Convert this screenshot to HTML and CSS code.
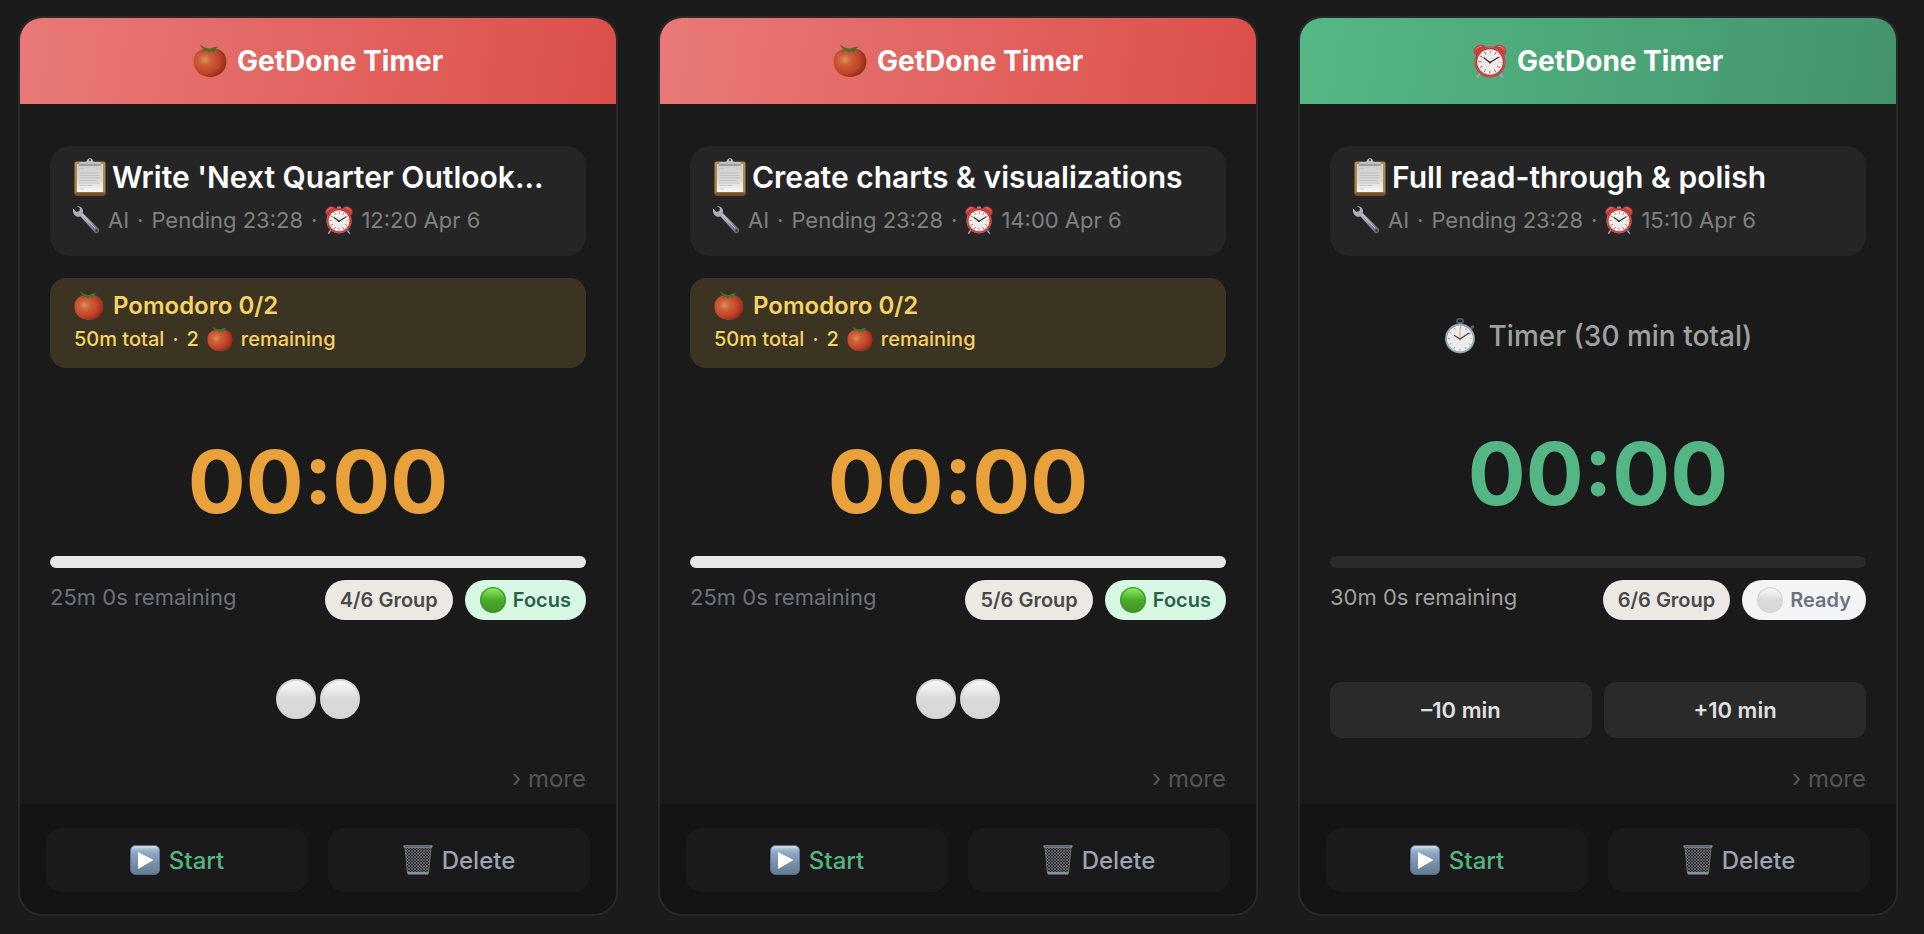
FILE: index.html
```html
<!DOCTYPE html>
<html lang="en">
<head>
<meta charset="utf-8">
<title>GetDone Timer</title>
<link rel="stylesheet" href="styles.css">
</head>
<body>
<svg class="defs" aria-hidden="true">
  <defs>
    <radialGradient id="tomato-skin" cx="0.35" cy="0.4" r="0.75">
      <stop offset="0" stop-color="#d9915a"/><stop offset="0.25" stop-color="#cf6038"/><stop offset="0.6" stop-color="#c0452a"/><stop offset="1" stop-color="#7e2014"/>
    </radialGradient>
    <linearGradient id="paper" x1="0" y1="0" x2="0" y2="1"><stop offset="0" stop-color="#cfcfcf"/><stop offset="0.6" stop-color="#dadada"/><stop offset="1" stop-color="#fafafa"/></linearGradient>
    <linearGradient id="steel" x1="0" y1="0" x2="1" y2="1"><stop offset="0" stop-color="#b4bec8"/><stop offset="0.55" stop-color="#9a9fae"/><stop offset="1" stop-color="#6f5c62"/></linearGradient>
    <linearGradient id="play-face" x1="0" y1="0" x2="0" y2="1"><stop offset="0" stop-color="#c3d4e6"/><stop offset="0.25" stop-color="#8ba7c5"/><stop offset="1" stop-color="#64798f"/></linearGradient>
    <linearGradient id="green-ball" x1="0" y1="0" x2="0" y2="1"><stop offset="0" stop-color="#8df25f"/><stop offset="0.3" stop-color="#5fc83c"/><stop offset="0.5" stop-color="#4bab2c"/><stop offset="1" stop-color="#3f9325"/></linearGradient>
    <linearGradient id="white-ball" x1="0" y1="0" x2="0" y2="1"><stop offset="0" stop-color="#f8f8f8"/><stop offset="0.25" stop-color="#ececec"/><stop offset="0.5" stop-color="#d9d9d9"/><stop offset="1" stop-color="#d8d8d8"/></linearGradient>
    <pattern id="mesh" width="3" height="3" patternUnits="userSpaceOnUse"><path d="M0 0L3 3M3 0L0 3" stroke="#8a8e95" stroke-width="0.6"/></pattern>
  </defs>
  <symbol id="tomato" viewBox="0 0 32 32">
    <path d="M16 4.500C24 3 31.500 7.500 31.500 16.500C31.500 25.500 24.500 31 16 31C7.500 31 0.500 25.500 0.500 16.500C0.500 7.500 8 3 16 4.500Z" fill="url(#tomato-skin)"/>
    <path d="M16 4.500C13 4 10 3.500 6.500 0.200C7.500 3 9 4.500 10.500 5.200L8 7.500L13 6.300L15 8.500L17 6.300L20 8L20.500 5.800L25 6.500L21.500 4.200L24.500 2.500C21.500 2.500 19 2.500 16 4.500Z" fill="#496f2b"/>
  </symbol>
  <symbol id="clipboard" viewBox="0 0 32 38">
    <rect x="0.500" y="3.500" width="31" height="34" rx="2" fill="#b08a4c"/>
    <path d="M1 34.500H31V36Q31 37.500 29 37.500H3Q1 37.500 1 36Z" fill="#77522a"/>
    <rect x="3" y="6" width="26" height="28" fill="url(#paper)"/>
    <path d="M5.500 11H10M5.500 15H25M5.500 17.500H25M5.500 20H25M5.500 22.500H23M5.500 25H25M5.500 27.500H18M5.500 31H10" stroke="#b9b9b9" stroke-width="0.7"/>
    <path d="M5 7.500V5.500Q5 4 7 4H12Q13 2.500 13.500 1.500Q16 -0.800 18.500 1.500Q19 3 20 4H25Q27 4 27 5.500V7.500Z" fill="#b9c1c9"/>
    <path d="M5 7H27" stroke="#6c747c" stroke-width="0.9"/>
    <circle cx="16" cy="2.200" r="1.100" fill="#46494d"/>
  </symbol>
  <symbol id="wrench" viewBox="0 0 28 28">
    <path d="M1 2.500L4.500 6L7.500 5L8 2L5 0.300C9 -0.300 12 3 10.800 7L26.500 22.500C28.500 25 25.500 28.500 23 26.700L8.500 10.500C4.500 11.800 0.200 8.500 1 2.500Z" fill="url(#steel)"/>
    <path d="M10 8.500L23 22" stroke="#d7dce2" stroke-width="0.8"/>
    <circle cx="24.600" cy="24.700" r="1.100" fill="#2a2526"/>
  </symbol>
  <symbol id="alarm" viewBox="0 0 34 34">
    <path d="M7.500 28.500L4.500 33M26.500 28.500L29.500 33" stroke="#a9adb4" stroke-width="1.700" stroke-linecap="round"/>
    <rect x="14.500" y="0.500" width="5" height="3" rx="1" fill="#8c949c"/>
    <path d="M1 9.500C-1 4 5.500 -1.500 11.500 1.500L13.500 4L3.500 12Z" fill="#c9403f"/>
    <path d="M33 9.500C35 4 28.500 -1.500 22.500 1.500L20.500 4L30.500 12Z" fill="#c9403f"/>
    <path d="M2.500 6Q5 2 9 2M25 2Q29 2 31.500 6" fill="none" stroke="#e57c78" stroke-width="1"/>
    <circle cx="17" cy="18" r="15.500" fill="#b93436"/>
    <circle cx="17" cy="18" r="14.700" fill="none" stroke="#d9635f" stroke-width="0.800"/>
    <circle cx="17" cy="18" r="12.800" fill="#edecea"/>
    <circle cx="17" cy="18" r="10" fill="none" stroke="#c45353" stroke-width="3.200" stroke-dasharray="0.800 4.436" stroke-dashoffset="0.400"/>
    <path d="M11 14L17 18.500L25 13.500" fill="none" stroke="#303030" stroke-width="1.300" stroke-linecap="round"/>
    <circle cx="17" cy="18.500" r="1" fill="#222"/>
  </symbol>
  <symbol id="stopwatch" viewBox="0 0 32 36">
    <rect x="13" y="1" width="6" height="4" rx="1.500" fill="none" stroke="#59636c" stroke-width="1.500"/>
    <rect x="14" y="4.500" width="4" height="3" fill="#6d7780"/>
    <path d="M27 10.500L29 8.500" stroke="#59636c" stroke-width="2.500" stroke-linecap="round"/>
    <circle cx="16" cy="20.500" r="15" fill="#7a8897"/>
    <circle cx="16" cy="20.500" r="14" fill="none" stroke="#b3c0cd" stroke-width="0.800"/>
    <circle cx="16" cy="20.500" r="13" fill="#ececea"/>
    <circle cx="16" cy="20.500" r="11" fill="none" stroke="#929292" stroke-width="2" stroke-dasharray="0.800 4.960" stroke-dashoffset="0.400"/>
    <path d="M16 9V23" stroke="#e0a080" stroke-width="1"/>
    <path d="M10.500 17.500L16 21L25 15" fill="none" stroke="#454545" stroke-width="1.200" stroke-linecap="round"/>
  </symbol>
  <symbol id="play" viewBox="0 0 30 30">
    <rect x="0.500" y="0.500" width="29" height="29" rx="5" fill="url(#play-face)" stroke="#5b6f86"/>
    <path d="M2.500 4Q3 2 6 2H24Q27 2 27.500 4" fill="none" stroke="#d5e2ee" stroke-width="1"/>
    <path d="M8 7L23.500 15L8 24Z" fill="#fff"/>
  </symbol>
  <symbol id="trash" viewBox="0 0 30 30">
    <path d="M2 2.500L4.500 28Q4.700 29.500 6 29.500H24Q25.300 29.500 25.500 28L28 2.500Z" fill="#25272a"/>
    <path d="M2 2.500L4.500 28H25.500L28 2.500Z" fill="url(#mesh)" stroke="#777c84" stroke-width="0.800"/>
    <rect x="0.300" y="0.300" width="29.400" height="2.400" rx="1.100" fill="#8a8f97"/>
    <path d="M2 1.700H28" stroke="#474b50" stroke-width="0.800"/>
    <path d="M4.300 27H25.700L25.200 29.500H4.800Z" fill="#8794a5"/>
  </symbol>
  <symbol id="ball-green" viewBox="0 0 40 40"><circle cx="20" cy="20" r="19" fill="url(#green-ball)" stroke="#3f9226" stroke-width="2"/></symbol>
  <symbol id="ball-white" viewBox="0 0 40 40"><circle cx="20" cy="20" r="19" fill="url(#white-ball)" stroke="#d5d5d5" stroke-width="2"/></symbol>
</svg>

<main class="board">
  <article class="card card--pomodoro">
    <header class="card-head"><svg class="icon-head"><use href="#tomato"/></svg><h2>GetDone Timer</h2></header>
    <div class="card-body">
      <section class="task">
        <h3 class="task-title"><svg class="icon-clip"><use href="#clipboard"/></svg><span>Write 'Next Quarter Outlook...</span></h3>
        <p class="task-meta"><svg class="icon-wrench"><use href="#wrench"/></svg><span>AI</span><span>·</span><span>Pending 23:28</span><span>·</span><svg class="icon-meta"><use href="#alarm"/></svg><span>12:20 Apr 6</span></p>
      </section>
      <section class="mode mode--pomodoro">
        <h4><svg class="icon-mode"><use href="#tomato"/></svg>Pomodoro 0/2</h4>
        <p><span>50m total</span><span>·</span><span>2</span><svg class="icon-small"><use href="#tomato"/></svg><span>remaining</span></p>
      </section>
      <div class="clock">00:00</div>
      <div class="bar"></div>
      <div class="status">
        <span class="left">25m 0s remaining</span>
        <span class="pill pill--group">4/6 Group</span>
        <span class="pill pill--focus"><svg class="icon-pill"><use href="#ball-green"/></svg>Focus</span>
      </div>
      <div class="rounds"><svg class="icon-round"><use href="#ball-white"/></svg><svg class="icon-round"><use href="#ball-white"/></svg></div>
      <button type="button" class="more">› more</button>
    </div>
    <footer class="card-foot">
      <button type="button" class="action action--start"><svg class="icon-action"><use href="#play"/></svg>Start</button>
      <button type="button" class="action"><svg class="icon-action"><use href="#trash"/></svg>Delete</button>
    </footer>
  </article>

  <article class="card card--pomodoro">
    <header class="card-head"><svg class="icon-head"><use href="#tomato"/></svg><h2>GetDone Timer</h2></header>
    <div class="card-body">
      <section class="task">
        <h3 class="task-title"><svg class="icon-clip"><use href="#clipboard"/></svg><span>Create charts &amp; visualizations</span></h3>
        <p class="task-meta"><svg class="icon-wrench"><use href="#wrench"/></svg><span>AI</span><span>·</span><span>Pending 23:28</span><span>·</span><svg class="icon-meta"><use href="#alarm"/></svg><span>14:00 Apr 6</span></p>
      </section>
      <section class="mode mode--pomodoro">
        <h4><svg class="icon-mode"><use href="#tomato"/></svg>Pomodoro 0/2</h4>
        <p><span>50m total</span><span>·</span><span>2</span><svg class="icon-small"><use href="#tomato"/></svg><span>remaining</span></p>
      </section>
      <div class="clock">00:00</div>
      <div class="bar"></div>
      <div class="status">
        <span class="left">25m 0s remaining</span>
        <span class="pill pill--group">5/6 Group</span>
        <span class="pill pill--focus"><svg class="icon-pill"><use href="#ball-green"/></svg>Focus</span>
      </div>
      <div class="rounds"><svg class="icon-round"><use href="#ball-white"/></svg><svg class="icon-round"><use href="#ball-white"/></svg></div>
      <button type="button" class="more">› more</button>
    </div>
    <footer class="card-foot">
      <button type="button" class="action action--start"><svg class="icon-action"><use href="#play"/></svg>Start</button>
      <button type="button" class="action"><svg class="icon-action"><use href="#trash"/></svg>Delete</button>
    </footer>
  </article>

  <article class="card card--timer">
    <header class="card-head"><svg class="icon-head"><use href="#alarm"/></svg><h2>GetDone Timer</h2></header>
    <div class="card-body">
      <section class="task">
        <h3 class="task-title"><svg class="icon-clip"><use href="#clipboard"/></svg><span>Full read-through &amp; polish</span></h3>
        <p class="task-meta"><svg class="icon-wrench"><use href="#wrench"/></svg><span>AI</span><span>·</span><span>Pending 23:28</span><span>·</span><svg class="icon-meta"><use href="#alarm"/></svg><span>15:10 Apr 6</span></p>
      </section>
      <section class="mode mode--timer"><svg class="icon-watch"><use href="#stopwatch"/></svg><h4>Timer (30 min total)</h4></section>
      <div class="clock">00:00</div>
      <div class="bar"></div>
      <div class="status">
        <span class="left">30m 0s remaining</span>
        <span class="pill pill--group">6/6 Group</span>
        <span class="pill pill--ready"><svg class="icon-pill"><use href="#ball-white"/></svg>Ready</span>
      </div>
      <div class="adjust">
        <button type="button">–10 min</button>
        <button type="button">+10 min</button>
      </div>
      <button type="button" class="more">› more</button>
    </div>
    <footer class="card-foot">
      <button type="button" class="action action--start"><svg class="icon-action"><use href="#play"/></svg>Start</button>
      <button type="button" class="action"><svg class="icon-action"><use href="#trash"/></svg>Delete</button>
    </footer>
  </article>
</main>
</body>
</html>
```
FILE: styles.css
```css
* { box-sizing: border-box; }

body {
  margin: 0;
  background: #1b1b1b;
  color: #fff;
  font-family: Inter, "Liberation Sans", sans-serif;
}

h2, h3, h4, p { margin: 0; }
button { border: 0; font-family: inherit; cursor: pointer; }
svg { flex: none; }
.defs { position: absolute; width: 0; height: 0; }

.board {
  display: grid;
  grid-template-columns: repeat(3, minmax(0, 1fr));
  gap: 40px;
  padding: 16px 26px 18px 18px;
}

.card {
  display: flex;
  flex-direction: column;
  border: 2px solid #292929;
  border-radius: 24px;
  overflow: hidden;
  background: #1a1a1a;
}

.card-head {
  display: flex;
  align-items: center;
  justify-content: center;
  gap: 10px;
  height: 86px;
}
.card-head h2 { font-size: 28px; line-height: 34px; font-weight: 700; }
.card--pomodoro .card-head { background: linear-gradient(100deg, #e87a77, #dc4f4a); }
.card--timer .card-head { background: linear-gradient(100deg, #55b885, #43946b); }

.card-body {
  flex: 1;
  display: flex;
  flex-direction: column;
  min-height: 700px;
  padding: 42px 30px 8px;
}

.task {
  padding: 12px 22px 22px;
  border-radius: 20px;
  background: #252525;
}
.task-title {
  display: flex;
  align-items: center;
  gap: 6px;
  padding-left: 2px;
  font-size: 30px;
  line-height: 38px;
  font-weight: 600;
  white-space: nowrap;
}
.task-meta {
  display: flex;
  align-items: center;
  gap: 8px;
  margin-top: 10px;
  font-size: 22px;
  line-height: 28px;
  color: #808080;
  white-space: nowrap;
}

.mode { margin-top: 22px; }
.mode--pomodoro {
  padding: 12px 24px 16px;
  border-radius: 16px;
  background: #3b3423;
  color: #f6d365;
}
.mode--pomodoro h4 {
  display: flex;
  align-items: center;
  gap: 9px;
  font-size: 24px;
  line-height: 32px;
  font-weight: 600;
}
.mode--pomodoro p {
  display: flex;
  align-items: center;
  gap: 8px;
  margin-top: 4px;
  font-size: 20px;
  line-height: 26px;
  font-weight: 500;
}
.mode--timer {
  display: flex;
  align-items: center;
  justify-content: center;
  gap: 13px;
  margin-bottom: 2px;
  padding: 40px 0 4px;
  color: #a0a0a0;
}
.mode--timer h4 { font-size: 28px; line-height: 34px; font-weight: 500; }

.clock {
  margin: 60px 0 20px;
  font-size: 86px;
  line-height: 108px;
  font-weight: 700;
  text-align: center;
}
.card--pomodoro .clock { color: #e9a23b; }
.card--timer .clock { color: #55b685; margin-bottom: 28px; }

.bar { height: 12px; border-radius: 6px; background: #e5e7eb; }
.card--timer .bar { background: #2a2a2a; }

.status {
  display: flex;
  align-items: center;
  gap: 12px;
  margin-top: 12px;
}
.left {
  margin-right: auto;
  padding-bottom: 6px;
  font-size: 22px;
  line-height: 28px;
  color: #6b7280;
}
.card--timer .left { color: #a0a0a0; }
.pill {
  display: flex;
  align-items: center;
  gap: 7px;
  height: 40px;
  padding: 0 15px;
  border-radius: 20px;
  font-size: 20px;
  font-weight: 600;
  white-space: nowrap;
}
.pill--group { background: #ece8e3; color: #4a4a4a; }
.pill--focus { background: #d8f8e6; color: #2b6048; }
.pill--ready { background: #f3f4f6; color: #6b7280; }

.rounds { display: flex; justify-content: center; gap: 4px; margin-top: 59px; }

.adjust { display: flex; gap: 12px; margin-top: 62px; }
.adjust button {
  flex: 1;
  height: 56px;
  border-radius: 12px;
  background: #2a2a2a;
  color: #e0e0e0;
  font-size: 22px;
  font-weight: 600;
}

.more {
  align-self: flex-end;
  margin-top: auto;
  padding: 0;
  background: none;
  color: #555;
  font-size: 24px;
  line-height: 34px;
}

.card-foot {
  display: flex;
  gap: 20px;
  padding: 24px 26px 22px;
  background: #141414;
}
.action {
  flex: 1;
  display: flex;
  align-items: center;
  justify-content: center;
  gap: 9px;
  height: 64px;
  border-radius: 16px;
  background: #1a1a1a;
  color: #9ca3af;
  font-size: 24px;
  font-weight: 500;
}
.action--start { color: #55b685; }

.icon-head { width: 34px; height: 34px; }
.icon-clip { width: 32px; height: 38px; }
.icon-wrench { width: 28px; height: 28px; }
.icon-meta { width: 28px; height: 28px; }
.icon-mode { width: 30px; height: 30px; }
.icon-small { width: 26px; height: 26px; }
.icon-watch { width: 32px; height: 36px; }
.icon-pill { width: 26px; height: 26px; }
.icon-round { width: 40px; height: 40px; }
.icon-action { width: 30px; height: 30px; }
```
